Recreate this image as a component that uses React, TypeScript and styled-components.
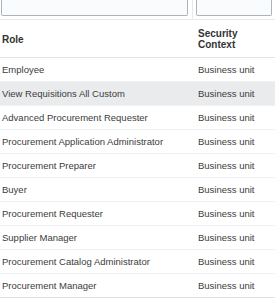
import { Fragment } from "react"
import styled, { createGlobalStyle } from "styled-components"

const GlobalStyle = createGlobalStyle`
  html, body {
    margin: 0;
    padding: 0;
    background: #ffffff;
  }
  body {
    font-family: Arial, "Liberation Sans", sans-serif;
    overflow: hidden;
  }
`

const Table = styled.div`
  width: 275px;
  display: grid;
  grid-template-columns: 193px 1fr;
  font-size: 9.5px;
  color: #3c3c3c;
`

const FilterCell = styled.div<{ $last?: boolean }>`
  height: 20px;
  box-sizing: border-box;
  padding: 0 ${(p) => (p.$last ? "3px" : "4px")} 3px ${(p) => (p.$last ? "3px" : "1px")};
  border-right: ${(p) => (p.$last ? "none" : "1px solid #e6e9ec")};
  border-bottom: 1px solid #e6e9ec;
  display: flex;
`

const FilterInput = styled.div`
  flex: 1;
  background: #f9fbfd;
  border: 1px solid #aab4bd;
  border-top: none;
  border-radius: 0 0 2px 2px;
`

const HeadCell = styled.div<{ $pad: number }>`
  height: 38px;
  box-sizing: border-box;
  padding-left: ${(p) => p.$pad}px;
  padding-top: 1px;
  border-bottom: 1px solid #dfe5ea;
  display: flex;
  align-items: center;
  font-weight: bold;
  font-size: 10px;
  line-height: 11px;
  color: #333333;
`

const Cell = styled.div<{ $pad: number; $active?: boolean; $last?: boolean }>`
  height: 24px;
  box-sizing: border-box;
  padding-left: ${(p) => p.$pad}px;
  display: flex;
  align-items: center;
  white-space: nowrap;
  background: ${(p) => (p.$active ? "#e9ebed" : "#ffffff")};
  border-bottom: 1px solid ${(p) => (p.$last ? "#dbe3ea" : "#f1f2f3")};
`

const roles = [
  "Employee",
  "View Requisitions All Custom",
  "Advanced Procurement Requester",
  "Procurement Application Administrator",
  "Procurement Preparer",
  "Buyer",
  "Procurement Requester",
  "Supplier Manager",
  "Procurement Catalog Administrator",
  "Procurement Manager",
]

export default function App() {
  return (
    <>
      <GlobalStyle />
      <Table>
        <FilterCell>
          <FilterInput />
        </FilterCell>
        <FilterCell $last>
          <FilterInput />
        </FilterCell>

        <HeadCell $pad={2}>Role</HeadCell>
        <HeadCell $pad={5}>
          Security
          <br />
          Context
        </HeadCell>

        {roles.map((role, i) => {
          const last = i === roles.length - 1
          return (
            <Fragment key={role}>
              <Cell $pad={2} $active={i === 1} $last={last}>
                {role}
              </Cell>
              <Cell $pad={5} $active={i === 1} $last={last}>
                Business unit
              </Cell>
            </Fragment>
          )
        })}
      </Table>
    </>
  )
}
